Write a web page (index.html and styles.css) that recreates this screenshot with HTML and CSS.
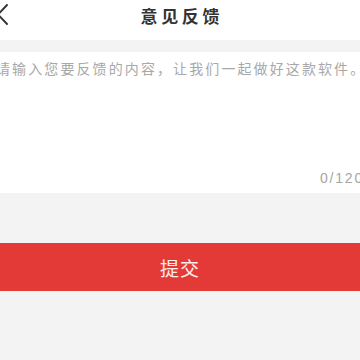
FILE: index.html
```html
<!DOCTYPE html>
<html lang="zh-CN">
<head>
<meta charset="utf-8">
<title>意见反馈</title>
<link rel="stylesheet" href="styles.css">
</head>
<body>
<div class="app">
  <header class="topbar">
    <svg class="back" width="12" height="31" viewBox="0 0 12 31" aria-hidden="true">
      <polyline points="11,5 2,14.5 11,24" fill="none" stroke="#333" stroke-width="1.9" stroke-linecap="round" stroke-linejoin="round"/>
    </svg>
    <h1 class="title">意见反馈</h1>
    <span class="spacer"></span>
  </header>
  <section class="box">
    <div class="placeholder">请输入您要反馈的内容，让我们一起做好这款软件。</div>
    <div class="counter">0/120</div>
  </section>
  <button class="submit" type="button">提交</button>
</div>
</body>
</html>
```
FILE: styles.css
```css
html, body {
  margin: 0;
  padding: 0;
  background: #f3f3f3;
  overflow: hidden;
  width: 360px;
  height: 360px;
}
.app {
  width: 368px;
  margin-left: -4px;
  font-family: "Noto Sans CJK SC", "Liberation Sans", sans-serif;
}
.topbar {
  display: flex;
  align-items: flex-start;
  height: 40px;
  background: #fff;
}
.back {
  display: block;
  flex: 0 0 12px;
}
.spacer {
  flex: 0 0 12px;
}
.title {
  flex: 1;
  margin: 0;
  text-align: center;
  font-size: 17px;
  font-weight: 700;
  line-height: 31px;
  letter-spacing: 3.6px;
  padding-left: 3.6px;
  color: #333;
}
.box {
  margin-top: 12px;
  background: #fff;
  height: 141px;
  box-sizing: border-box;
  padding: 6px 0 5px 0;
  display: flex;
  flex-direction: column;
  justify-content: space-between;
}
.placeholder {
  font-size: 14px;
  line-height: 20px;
  letter-spacing: 2.1px;
  color: #a8a8a8;
  white-space: nowrap;
}
.counter {
  font-family: "Liberation Sans", sans-serif;
  font-size: 14px;
  line-height: 20px;
  letter-spacing: 1.8px;
  color: #a6a6a6;
  text-align: right;
}
.submit {
  display: block;
  width: 100%;
  margin-top: 50px;
  height: 48px;
  border: 0;
  padding: 0;
  background: #e43a37;
  color: #fdeeec;
  font-family: "Noto Sans CJK SC", sans-serif;
  font-size: 19px;
  letter-spacing: 1px;
}
```
